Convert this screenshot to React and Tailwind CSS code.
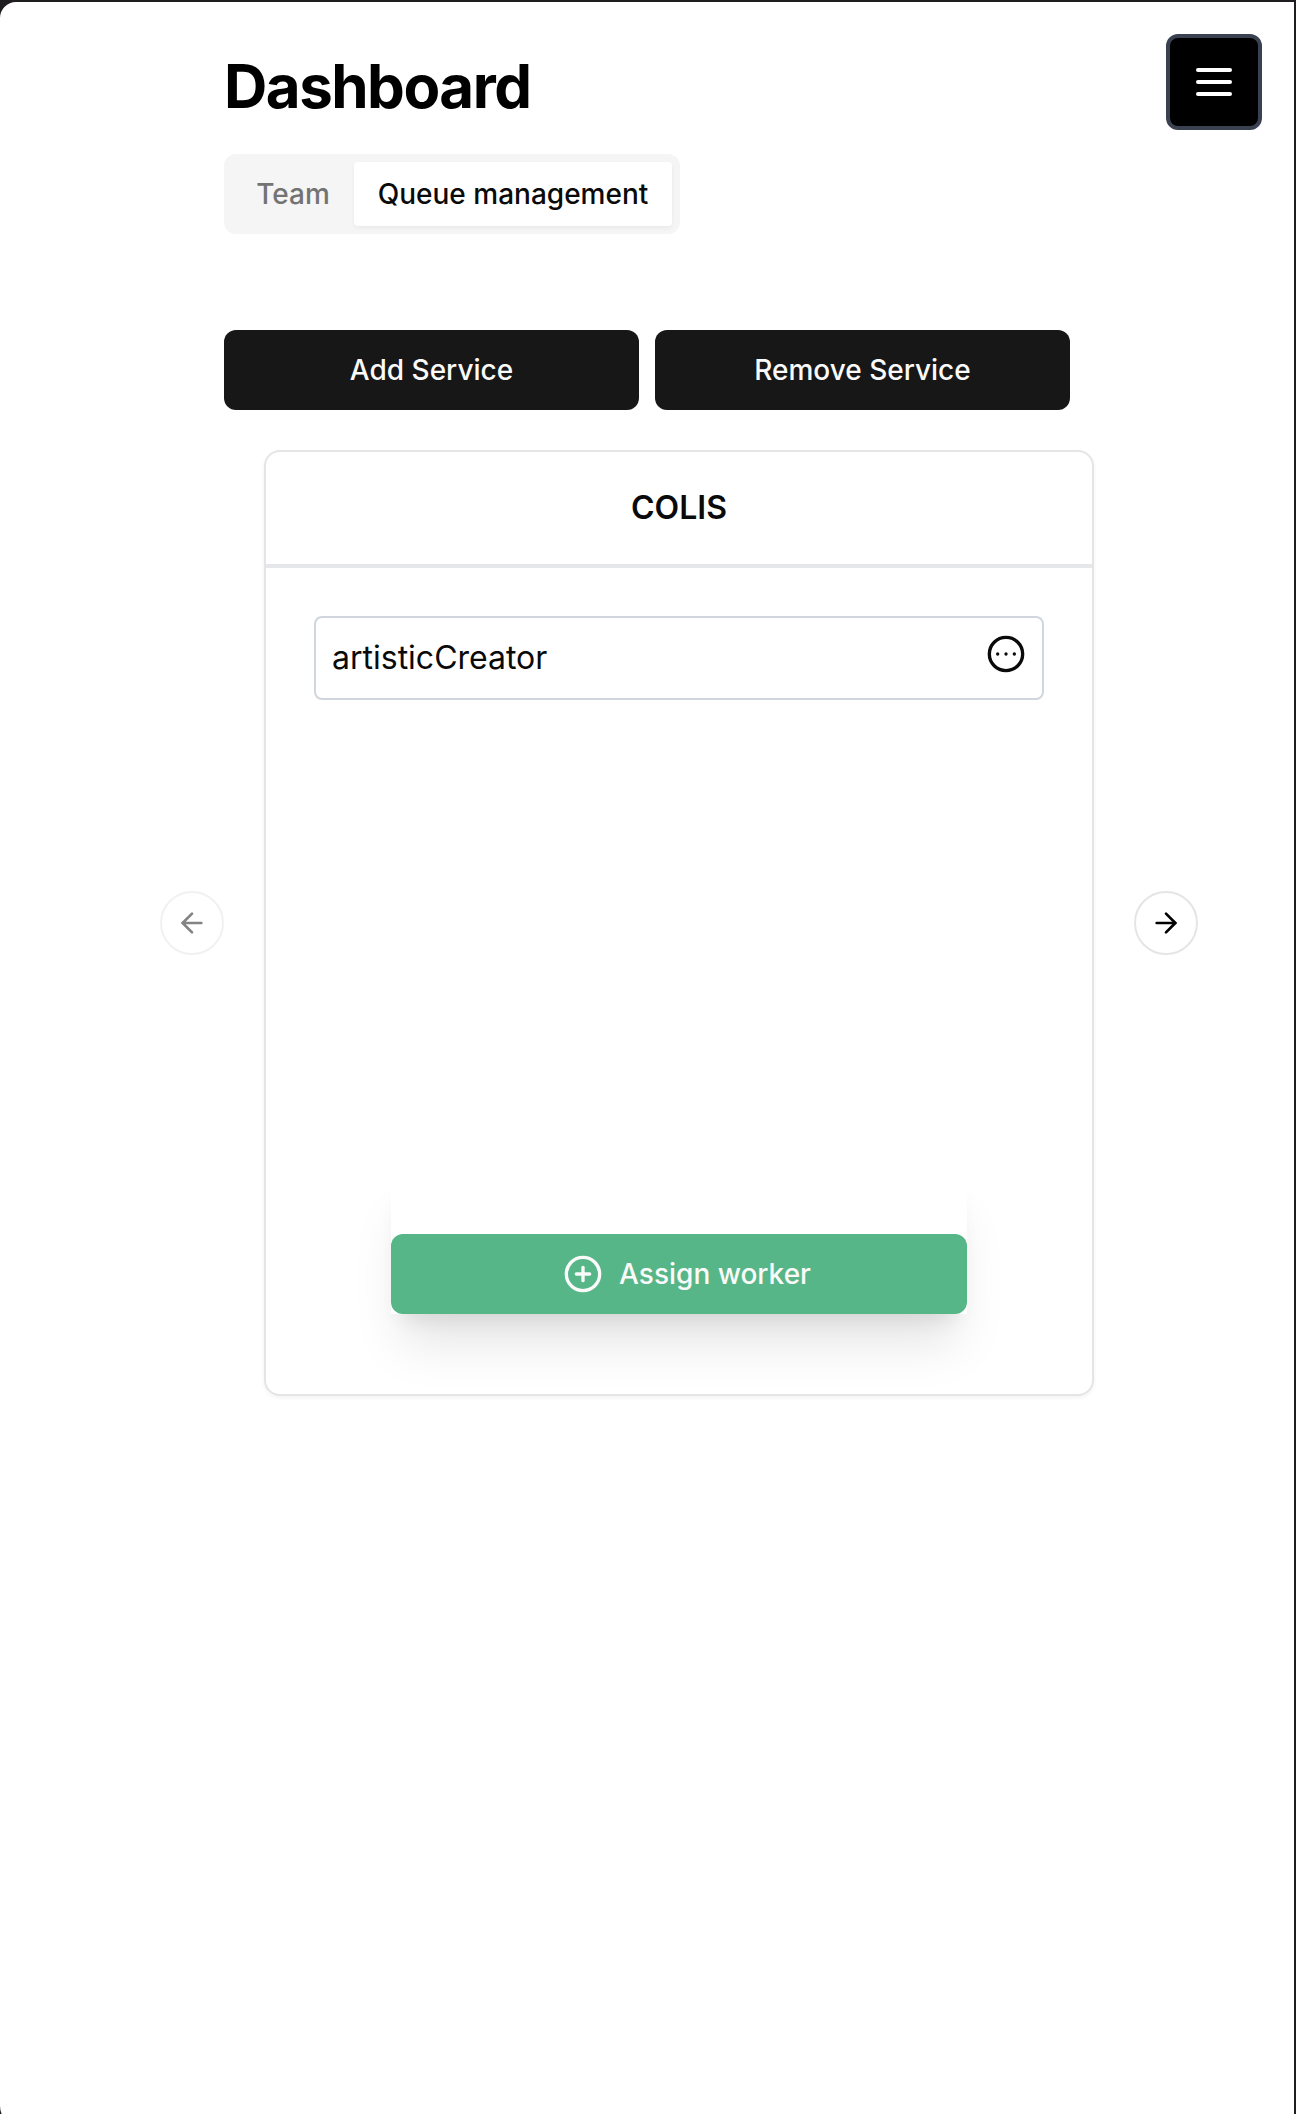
import { ArrowLeft, ArrowRight, CircleEllipsis, CirclePlus } from "lucide-react";

function MenuButton() {
  return (
    <button
      aria-label="Open menu"
      className="absolute top-8 right-8 flex size-24 flex-col items-center justify-center gap-2 rounded-xl border-4 border-[#3a4150] bg-black"
    >
      <span className="h-1 w-9 rounded-full bg-white" />
      <span className="h-1 w-9 rounded-full bg-white" />
      <span className="h-1 w-9 rounded-full bg-white" />
    </button>
  );
}

function Tabs() {
  return (
    <div className="mt-8 flex h-20 w-[456px] items-center rounded-xl bg-[#f5f5f5] p-2 text-[28px] leading-10 font-medium">
      <button className="flex h-16 w-[122px] items-center justify-center text-[#737373]">Team</button>
      <button className="flex h-16 flex-1 items-center justify-center rounded bg-white whitespace-nowrap text-[#0a0a0a] shadow-[0_2px_4px_rgba(0,0,0,0.05)]">
        Queue management
      </button>
    </div>
  );
}

function ServiceCard() {
  return (
    <section className="flex h-[946px] w-[830px] shrink-0 flex-col rounded-2xl border-2 border-[#e5e5e5] bg-white shadow-[0_2px_4px_rgba(0,0,0,0.05)]">
      <h2 className="flex h-[116px] items-center justify-center border-b-4 border-gray-200 text-[32px] leading-10 font-semibold">
        COLIS
      </h2>
      <div className="flex flex-1 flex-col items-center px-12 pt-12 pb-20">
        <div className="flex h-21 w-full items-center justify-between rounded-lg border-2 border-gray-300 px-4 text-[32px]">
          <span>artisticCreator</span>
          <CircleEllipsis className="mb-2 size-10" />
        </div>
        <div className="mt-auto w-[576px] bg-white pt-16 shadow-[0_40px_50px_-10px_rgba(0,0,0,0.1),0_16px_20px_-12px_rgba(0,0,0,0.1)]">
          <button className="flex h-20 w-full items-center justify-center rounded-xl bg-[#57b687] text-[28px] font-medium text-[#fafafa]">
            <CirclePlus className="mx-4 size-10" />
            Assign worker
          </button>
        </div>
      </div>
    </section>
  );
}

export default function App() {
  return (
    <div className="h-[2114px] w-[1296px] overflow-hidden bg-[#1f1d1f] pt-0.5 pr-0.5 font-['Inter',sans-serif] text-[#0a0a0a]">
      <main className="relative h-[2124px] rounded-tl-2xl rounded-bl-[20px] bg-white pt-12">
        <MenuButton />
        <div className="ml-56 w-[846px]">
          <h1 className="text-[60px] leading-[72px] font-bold tracking-tight text-black">Dashboard</h1>
          <Tabs />
          <div className="mt-24 flex gap-4">
            <button className="h-20 flex-1 rounded-xl bg-[#171717] text-[28px] font-medium text-[#fafafa]">
              Add Service
            </button>
            <button className="h-20 flex-1 rounded-xl bg-[#171717] text-[28px] font-medium text-[#fafafa]">
              Remove Service
            </button>
          </div>
        </div>
        <div className="mt-10 ml-40 flex w-[1038px] items-center justify-between">
          <button
            aria-label="Previous service"
            disabled
            className="flex size-16 items-center justify-center rounded-full border-2 border-[#e5e5e5] opacity-50"
          >
            <ArrowLeft className="size-8" />
          </button>
          <ServiceCard />
          <button
            aria-label="Next service"
            className="flex size-16 items-center justify-center rounded-full border-2 border-[#e5e5e5] text-black"
          >
            <ArrowRight className="size-8" />
          </button>
        </div>
      </main>
    </div>
  );
}
